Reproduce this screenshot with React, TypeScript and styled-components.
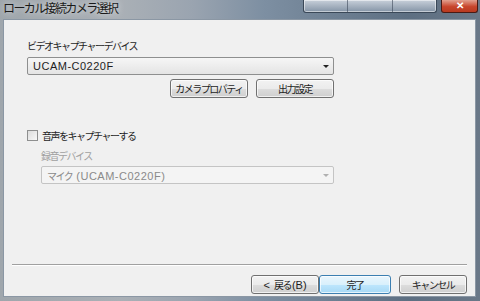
import React from "react";
import styled, { createGlobalStyle } from "styled-components";

const Global = createGlobalStyle`
  html, body { margin: 0; padding: 0; width: 480px; height: 301px; overflow: hidden; }
  body { font-family: "Liberation Sans", "Noto Sans CJK JP", sans-serif; }
`;

const Frame = styled.div`
  width: 480px;
  height: 301px;
  box-sizing: border-box;
  display: flex;
  flex-direction: column;
  background: linear-gradient(90deg, #9fa6ac 0%, #aab0b6 25%, #9aa4b0 40%, #7d8fa2 55%, #6d7f92 70%, #5d6f82 85%, #6a7888 100%);
  padding: 0 4px 4px 3px;
`;

const TitleBar = styled.div`
  height: 19px;
  display: flex;
  align-items: flex-start;
  justify-content: space-between;
`;

const Title = styled.div`
  font-family: "Noto Sans CJK JP", sans-serif;
  font-size: 12px;
  letter-spacing: -1.6px;
  line-height: 14px;
  color: #1a1a1a;
  padding-top: 1px;
  text-shadow: 0 0 6px rgba(255,255,255,0.8);
`;

const Caption = styled.div`
  display: flex;
  gap: 4px;
  margin-right: -2px;
`;

const GlassGroup = styled.div`
  display: flex;
  height: 12px;
  border: 1px solid #3a4858;
  border-top: none;
  border-radius: 0 0 3px 3px;
  background: linear-gradient(#c8d0da, #8494a6);
  box-shadow: inset 0 0 0 1px rgba(255,255,255,0.5);
`;

const GlassBtn = styled.div<{ w: number }>`
  width: ${p => p.w}px;
  border-right: 1px solid rgba(60,72,88,0.6);
  &:last-child { border-right: none; }
`;

const CloseBtn = styled.div`
  width: 35px;
  height: 12px;
  border: 1px solid #4a1a14;
  border-top: none;
  border-radius: 0 0 3px 3px;
  background: linear-gradient(#e2a08f, #c8452c 55%, #b83a20);
  display: flex;
  align-items: center;
  justify-content: center;
  color: #fff;
  font-size: 10px;
  font-weight: bold;
  line-height: 10px;
`;

const Client = styled.div`
  flex: 1;
  background: #f0f0f0;
  border: 1px solid #8b97a4;
  display: flex;
  flex-direction: column;
`;

const Body = styled.div`
  flex: 1;
  padding: 19px 0 0 23px;
  display: flex;
  flex-direction: column;
`;

const Label = styled.div<{ disabled?: boolean }>`
  font-family: "Noto Sans CJK JP", sans-serif;
  font-size: 10px;
  letter-spacing: -1.5px;
  line-height: 13px;
  color: ${p => (p.disabled ? "#a0a0a0" : "#1e1e1e")};
`;

const Combo = styled.div<{ disabled?: boolean; w: number }>`
  width: ${p => p.w}px;
  height: 18px;
  box-sizing: border-box;
  border: 1px solid ${p => (p.disabled ? "#c4c4c4" : "#8e8f8f")};
  border-radius: 2px;
  background: ${p => (p.disabled ? "#f4f4f4" : "linear-gradient(#f6f6f6, #e4e4e4)")};
  display: flex;
  align-items: center;
  justify-content: space-between;
  padding: 0 4px 0 5px;
  font-size: 11px;
  letter-spacing: 0.5px;
  color: ${p => (p.disabled ? "#8a8a8a" : "#1e1e1e")};
`;

const Jp = styled.span`
  font-family: "Noto Sans CJK JP", sans-serif;
  font-size: 10px;
  letter-spacing: -1.5px;
  margin-right: 4px;
`;

const Arrow = styled.div<{ disabled?: boolean }>`
  width: 0;
  height: 0;
  border-left: 3px solid transparent;
  border-right: 3px solid transparent;
  border-top: 3px solid ${p => (p.disabled ? "#b0b0b0" : "#222")};
`;

const ButtonRow = styled.div<{ ml: number; gap: number }>`
  display: flex;
  gap: ${p => p.gap}px;
  margin-left: ${p => p.ml}px;
`;

const Btn = styled.div<{ w: number; focus?: boolean }>`
  width: ${p => p.w}px;
  height: 19px;
  box-sizing: border-box;
  border: 1px solid ${p => (p.focus ? "#3c7fb1" : "#707070")};
  border-radius: 3px;
  background: ${p =>
    p.focus
      ? "linear-gradient(#eaf6fd 0%, #d9f0fc 50%, #bee6fd 51%, #a7d9f5 100%)"
      : "linear-gradient(#f2f2f2 0%, #ebebeb 50%, #dddddd 51%, #cfcfcf 100%)"};
  box-shadow: inset 0 0 0 1px rgba(255,255,255,0.7);
  display: flex;
  align-items: center;
  justify-content: center;
  font-family: "Noto Sans CJK JP", sans-serif;
  font-size: 10px;
  letter-spacing: -1.5px;
  white-space: nowrap;
  color: #1e1e1e;
`;

const Latin = styled.span<{ ml?: number; mr?: number }>`
  font-family: "Liberation Sans", sans-serif;
  font-size: 11px;
  letter-spacing: 0;
  margin-left: ${p => p.ml ?? 0}px;
  margin-right: ${p => p.mr ?? 0}px;
`;

const CheckRow = styled.div`
  display: flex;
  align-items: center;
  gap: 4px;
`;

const CheckBox = styled.div`
  width: 11px;
  height: 11px;
  box-sizing: border-box;
  border: 1px solid #8e8f8f;
  background: linear-gradient(135deg, #dcdcdc, #f8f8f8);
`;

const Indent = styled.div`
  padding-left: 14px;
  display: flex;
  flex-direction: column;
`;

const Separator = styled.div`
  height: 1px;
  background: #a0a0a0;
  border-bottom: 1px solid #fff;
  margin: 0 8px 0 8px;
`;

const Footer = styled.div`
  height: 30px;
  display: flex;
  align-items: flex-start;
  justify-content: flex-end;
  padding: 9px 8px 0 0;
  box-sizing: border-box;
`;

const Spacer = styled.div<{ h?: number; w?: number }>`
  flex: none;
  height: ${p => p.h ?? 0}px;
  width: ${p => p.w ?? 0}px;
`;

export default function App() {
  return (
    <>
      <Global />
      <Frame>
        <TitleBar>
          <Title>ローカル接続カメラ選択</Title>
          <Caption>
            <GlassGroup>
              <GlassBtn w={43} />
              <GlassBtn w={44} />
              <GlassBtn w={43} />
            </GlassGroup>
            <CloseBtn>✕</CloseBtn>
          </Caption>
        </TitleBar>
        <Client>
          <Body>
            <Label>ビデオキャプチャーデバイス</Label>
            <Spacer h={5} />
            <Combo w={307}>
              <span>UCAM-C0220F</span>
              <Arrow />
            </Combo>
            <Spacer h={4} />
            <ButtonRow ml={143} gap={8}>
              <Btn w={78}>カメラプロパティ</Btn>
              <Btn w={78}>出力設定</Btn>
            </ButtonRow>
            <Spacer h={31} />
            <CheckRow>
              <CheckBox />
              <Label>音声をキャプチャーする</Label>
            </CheckRow>
            <Indent>
              <Spacer h={7} />
              <Label disabled>録音デバイス</Label>
              <Spacer h={4} />
              <Combo w={293} disabled>
                <span><Jp>マイク</Jp>(UCAM-C0220F)</span>
                <Arrow disabled />
              </Combo>
            </Indent>
          </Body>
          <Separator />
          <Footer>
            <Btn w={68}><Latin mr={4}>&lt;</Latin>戻る<Latin ml={1}>(B)</Latin></Btn>
            <Btn w={72} focus>完了</Btn>
            <Spacer w={8} />
            <Btn w={68}>キャンセル</Btn>
          </Footer>
        </Client>
      </Frame>
    </>
  );
}
